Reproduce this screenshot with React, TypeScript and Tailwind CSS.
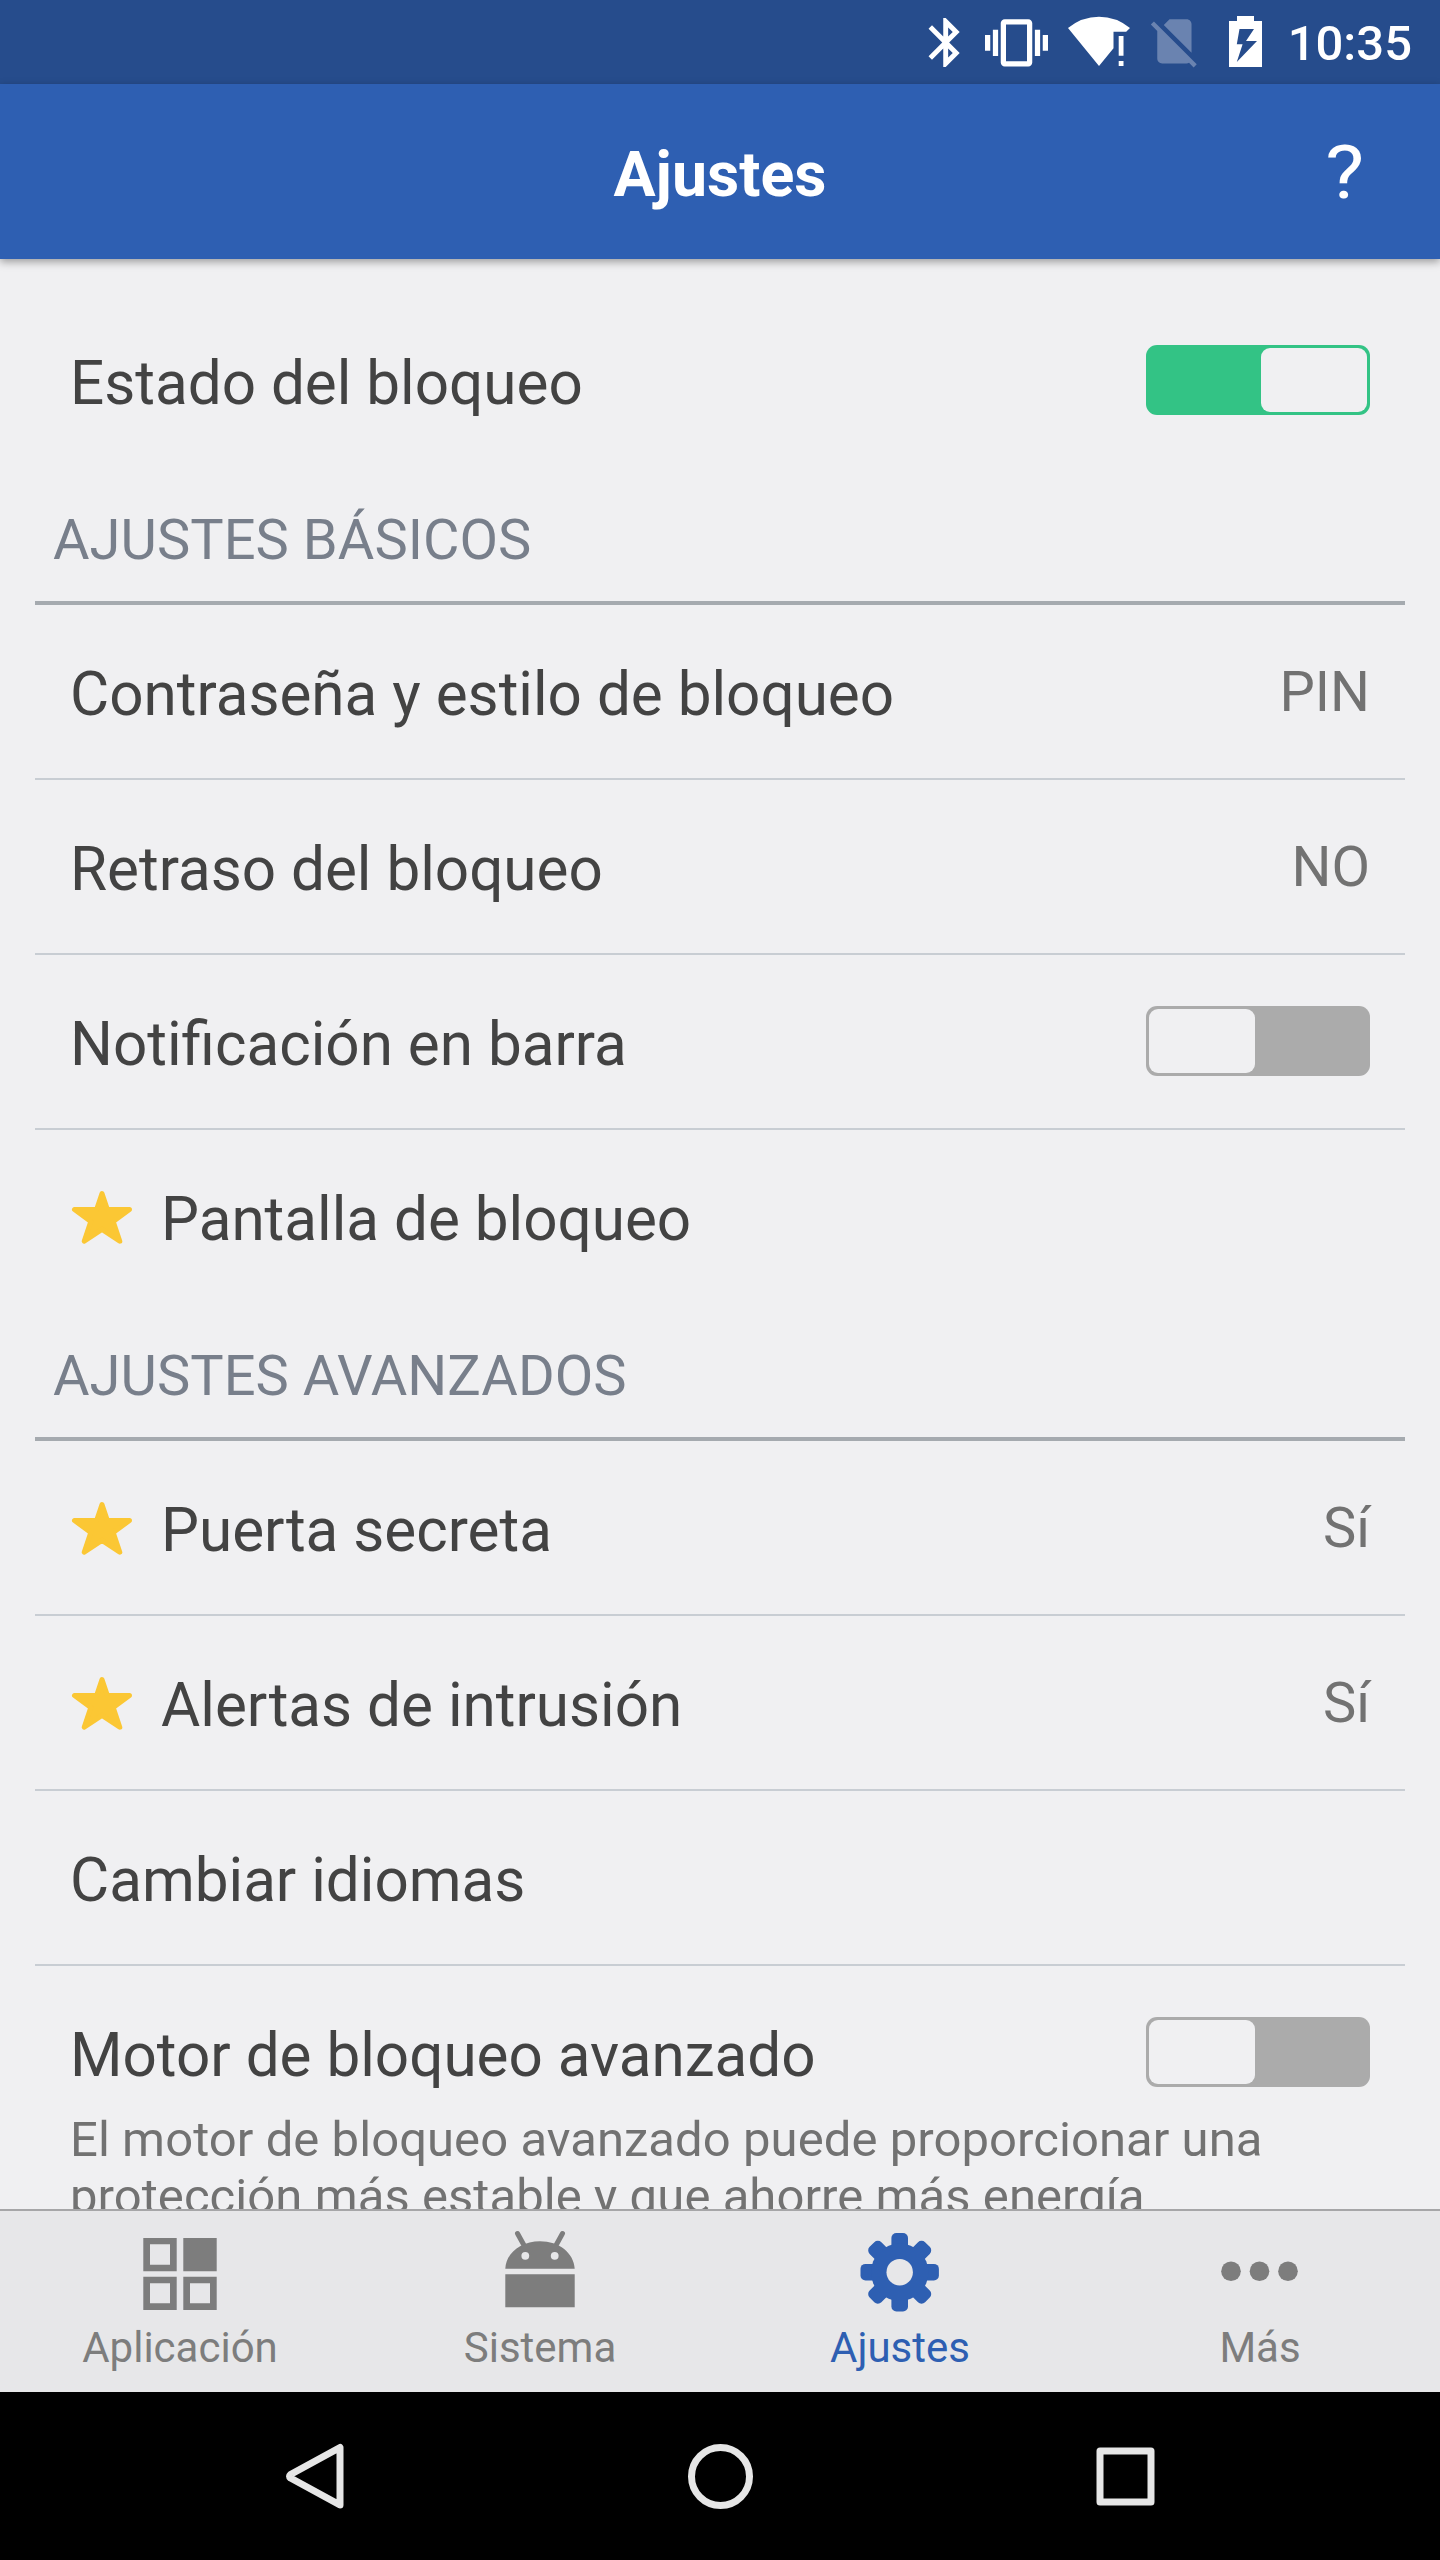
import React from "react";

type RowProps = {
  label: string;
  value?: string;
  toggle?: boolean;
  starred?: boolean;
  last?: boolean;
};

const Toggle = ({ on }: { on: boolean }) => (
  <span
    className={`-mt-px flex h-[70px] w-56 rounded-[11px] p-[3px] ${
      on ? "justify-end bg-[#33c385]" : "justify-start bg-[#ababab]"
    }`}
  >
    <span className="h-16 w-[106px] rounded-[9px] bg-[#f0f0f2]" />
  </span>
);

const Star = () => (
  <svg className="mr-7 h-[63px] w-[63px]" viewBox="0 0 63 63">
    <path
      d="M32 8.5L37.4 24.5L59.5 24.5L43.2 36.6L49.8 56.2L32 44.4L14.2 56.2L20.8 36.6L4.5 24.5L26.6 24.5Z"
      fill="#fbc734"
      stroke="#fbc734"
      strokeWidth="5"
      strokeLinejoin="round"
    />
  </svg>
);

const Row = ({ label, value, toggle, starred, last }: RowProps) => (
  <div
    className={`mx-[35px] flex h-[175px] items-center border-b-2 px-[35px] ${
      last ? "border-transparent" : "border-[#c8cdd3]"
    }`}
  >
    {starred && <Star />}
    <span className="flex-1 pt-[6px] text-[60.2px] leading-[72px] text-[#434343]">
      {label}
    </span>
    {value && (
      <span className="text-[56px] leading-[66px] text-[#727272]">{value}</span>
    )}
    {toggle !== undefined && <Toggle on={toggle} />}
  </div>
);

const SectionTitle = ({ children }: { children: React.ReactNode }) => (
  <h2 className="mx-[35px] h-[136px] border-b-4 border-[#a5aaaf] pl-[18px] pt-[38px] text-[56px] leading-[66px] tracking-[0.06px] text-[#787f8b]">
    {children}
  </h2>
);

const StatusBar = () => (
  <div className="h-[84px] bg-[#264c8c] text-white">
    <div className="flex h-full items-center justify-end pr-[28px]">
      <svg className="h-[84px] w-[360px]" viewBox="920 0 360 84" fill="#fff">
        <path
          transform="translate(916.3 13.1) scale(2.45)"
          d="M17.71 7.71L12 2h-1v7.59L6.41 5 5 6.41 10.59 12 5 17.59 6.41 19 11 14.41V22h1l5.71-5.71-4.3-4.29 4.3-4.29zM13 5.83l1.88 1.88L13 9.59V5.83zm1.88 10.46L13 18.17v-3.76l1.88 1.88z"
        />
        <path
          transform="translate(985 11.3) scale(2.625)"
          d="M0 15h2V9H0v6zm3 2h2V7H3v10zm19-8v6h2V9h-2zm-3 8h2V7h-2v10zM16.5 3h-9C6.67 3 6 3.67 6 4.5v15c0 .83.67 1.5 1.5 1.5h9c.83 0 1.5-.67 1.5-1.5v-15c0-.83-.67-1.5-1.5-1.5zM16 19H8V5h8v14z"
        />
        <path d="M1068 28Q1082 16.8 1099 16.8T1130 28L1126.2 31.7H1113.5V48.3L1099 66ZM1118.7 36h4.8v19.7h-4.8zM1118.7 61h4.8v5h-4.8z" />
        <path
          transform="translate(1145 12) scale(2.45)"
          fill="#6a83b0"
          d="M18.99 5c0-1.1-.89-2-1.99-2h-7L7.66 5.34 19 16.68 18.99 5zM3.65 3.88L2.38 5.15 5 7.77V19c0 1.1.9 2 2 2h10.01c.35 0 .67-.1.96-.26l1.88 1.88 1.27-1.27L3.65 3.88z"
        />
        <path
          fillRule="evenodd"
          d="M1237 16h17v5h8v46h-33V21h8zM1239.5 29l-2.7 15.3h5.8l-5.8 17.7 20.2-21h-11l8-12z"
        />
      </svg>
      <span className="pl-2 pt-[4px] text-[49px] font-medium leading-[80px]">
        10:35
      </span>
    </div>
  </div>
);

const Header = () => (
  <header className="relative z-10 grid h-[175px] grid-cols-[1fr_auto_1fr] items-center bg-[#2e5fb2] text-white shadow-[0_3px_8px_rgba(0,0,0,0.35)]">
    <span />
    <h1 className="pt-[6px] text-[62.7px] font-bold leading-[74px]">Ajustes</h1>
    <button className="mr-[78px] scale-x-110 justify-self-end text-[75px] leading-[88px]">
      ?
    </button>
  </header>
);

const AppsIcon = () => (
  <svg className="h-[84px] w-[84px]" viewBox="0 0 84 84" fill="#7d7d7d">
    <path
      fillRule="evenodd"
      d="M5.3 9h33.4v33.3H5.3zM12 15.3v20.4h20V15.3zM45.3 9h33.4v33.3H45.3zM5.3 47.7h33.4V81H5.3zM12 54.3v20h20v-20zM45.3 47.7h33.4V81H45.3zM52 54.3v20h20v-20z"
    />
  </svg>
);

const SystemIcon = () => (
  <svg className="h-[84px] w-[84px]" viewBox="0 0 84 84" fill="#7d7d7d">
    <path
      d="M19.5 4.5L27.5 19M64.5 4.5L56.5 19"
      stroke="#7d7d7d"
      strokeWidth="5"
      strokeLinecap="round"
    />
    <path d="M7.3 39.7C8 24 23 12.2 42 12.2S76 24 76.7 39.7ZM7.3 45.2h69.4v33H7.3z" />
    <circle cx="27.3" cy="26.8" r="3.9" fill="#e7e7e9" />
    <circle cx="56.7" cy="26.8" r="3.9" fill="#e7e7e9" />
  </svg>
);

const GearIcon = () => (
  <svg className="h-[84px] w-[84px]" viewBox="0 0 84 84" fill="#2e5fb2">
    {[0, 45, 90, 135].map((angle) => (
      <rect
        key={angle}
        x="33.4"
        y="4"
        width="16.6"
        height="78.4"
        rx="5"
        transform={`rotate(${angle} 41.7 43.2)`}
      />
    ))}
    <circle cx="41.7" cy="43.2" r="28.7" />
    <circle cx="41.7" cy="43.2" r="13.2" fill="#e7e7e9" />
  </svg>
);

const MoreIcon = () => (
  <svg className="h-[84px] w-[84px]" viewBox="0 0 84 84" fill="#7d7d7d">
    <circle cx="13" cy="42.3" r="9.8" />
    <circle cx="41.5" cy="42.3" r="9.8" />
    <circle cx="70" cy="42.3" r="9.8" />
  </svg>
);

const tabs = [
  { label: "Aplicación", icon: <AppsIcon /> },
  { label: "Sistema", icon: <SystemIcon /> },
  { label: "Ajustes", icon: <GearIcon />, active: true },
  { label: "Más", icon: <MoreIcon /> },
];

const TabBar = () => (
  <nav className="grid h-[183px] grid-cols-4 border-t-2 border-[#a6a6a8] bg-[#e7e7e9]">
    {tabs.map((tab) => (
      <div
        key={tab.label}
        className={`flex flex-col items-center pt-[18px] ${
          tab.active ? "text-[#2e5fb2]" : "text-[#7d7d7d]"
        }`}
      >
        {tab.icon}
        <span className="mt-[10px] text-[42px] leading-[50px]">{tab.label}</span>
      </div>
    ))}
  </nav>
);

const NavigationBar = () => (
  <div className="flex h-[168px] items-center justify-around bg-black px-[112px]">
    <svg className="h-[84px] w-[84px]" viewBox="0 0 84 84" fill="none" stroke="#e6e6e6" strokeWidth="7" strokeLinejoin="round">
      <path d="M67 13.5V71L17.5 44Q15.5 42.3 17.5 40.5Z" />
    </svg>
    <svg className="h-[84px] w-[84px]" viewBox="0 0 84 84" fill="none" stroke="#e6e6e6" strokeWidth="7">
      <circle cx="42.5" cy="42.5" r="29" />
    </svg>
    <svg className="h-[84px] w-[84px]" viewBox="0 0 84 84" fill="none" stroke="#e6e6e6" strokeWidth="7" strokeLinejoin="round">
      <rect x="17" y="17" width="51" height="51" />
    </svg>
  </div>
);

export default function App() {
  return (
    <div className="flex h-[2560px] w-[1440px] flex-col overflow-hidden bg-[#f0f0f2] font-['Roboto',sans-serif]">
      <StatusBar />
      <Header />

      <main className="min-h-0 flex-1 overflow-hidden pt-[35px]">
        <Row label="Estado del bloqueo" toggle={true} last />

        <SectionTitle>AJUSTES BÁSICOS</SectionTitle>
        <Row label="Contraseña y estilo de bloqueo" value="PIN" />
        <Row label="Retraso del bloqueo" value="NO" />
        <Row label="Notificación en barra" toggle={false} />
        <Row label="Pantalla de bloqueo" starred last />

        <SectionTitle>AJUSTES AVANZADOS</SectionTitle>
        <Row label="Puerta secreta" value="Sí" starred />
        <Row label="Alertas de intrusión" value="Sí" starred />
        <Row label="Cambiar idiomas" />
        <Row label="Motor de bloqueo avanzado" toggle={false} last />
        {/* runs under the tab bar while scrolled to the top */}
        <p className="-mt-[30px] pl-[70px] text-[49px] leading-[57px] tracking-[0.06px] text-[#727272]">
          El motor de bloqueo avanzado puede proporcionar una
          <br />
          protección más estable y que ahorre más energía
        </p>
      </main>

      <TabBar />
      <NavigationBar />
    </div>
  );
}
